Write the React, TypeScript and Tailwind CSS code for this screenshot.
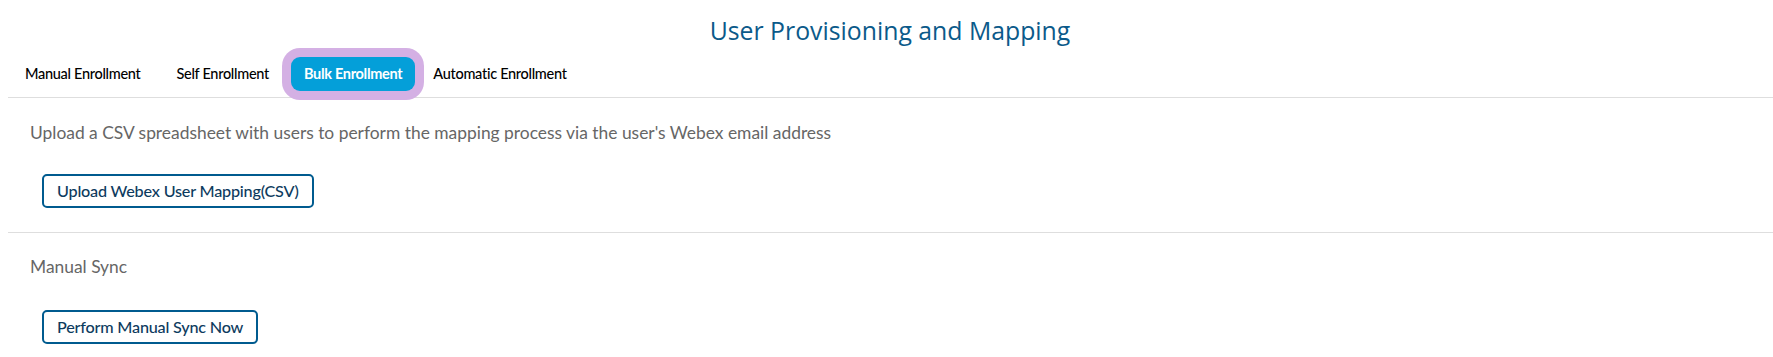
import React, { useState } from "react";

const tabs = ["Manual Enrollment", "Self Enrollment", "Bulk Enrollment", "Automatic Enrollment"];

export default function App() {
  const [active, setActive] = useState("Bulk Enrollment");

  return (
    <div className="min-h-screen bg-white font-['Lato',sans-serif]">
      <h1 className="h-[49px] pl-[7px] pt-[13px] text-center font-['Open_Sans',sans-serif] text-[24.8px] leading-[34px] text-[#0b5a8a]">
        User Provisioning and Mapping
      </h1>

      <div className="ml-2 flex h-[49px] items-center gap-2 border-b border-[#dedede] pl-[3px] pt-[2px]">
        {tabs.map((tab) => (
          <TabButton key={tab} label={tab} active={tab === active} onClick={() => setActive(tab)} />
        ))}
      </div>

      <Section
        text="Upload a CSV spreadsheet with users to perform the mapping process via the user's Webex email address"
        button="Upload Webex User Mapping(CSV)"
        bordered
      />
      <Section text="Manual Sync" button="Perform Manual Sync Now" />
    </div>
  );
}

const TabButton = ({
  label,
  active,
  onClick,
}: {
  label: string;
  active: boolean;
  onClick: () => void;
}) => (
  <button
    type="button"
    onClick={onClick}
    className={
      active
        ? "mr-[-4px] h-[34px] rounded-[9px] bg-[#049fd9] px-[13px] text-[14.5px] font-bold tracking-[-0.3px] text-white ring-[9px] ring-[#d4b0e4]"
        : "h-[34px] px-[14px] text-[14.5px] font-medium tracking-[-0.3px] text-black"
    }
  >
    {label}
  </button>
);

const Section = ({
  text,
  button,
  bordered = false,
}: {
  text: string;
  button: string;
  bordered?: boolean;
}) => (
  <div className={bordered ? "ml-2 border-b border-[#dedede] pb-6 pt-6" : "ml-2 pb-3 pt-[23px]"}>
    <p className="pl-[22px] text-[17.4px] leading-[22px] text-[#666666]">{text}</p>
    <button
      type="button"
      className={
        (bordered ? "mt-[30px]" : "mt-[32px]") +
        " ml-[34px] h-[34px] rounded-[5px] border-2 border-[#005b8f] px-[13px] text-[16.2px] font-medium tracking-[-0.2px] text-[#0d3b5e]"
      }
    >
      {button}
    </button>
  </div>
);
